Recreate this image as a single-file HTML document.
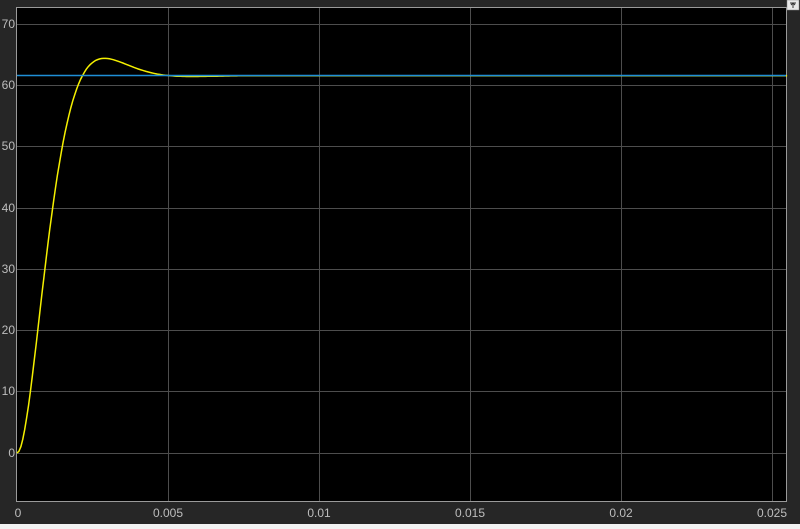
<!DOCTYPE html>
<html><head><style>
html,body{margin:0;padding:0;background:#262626;width:800px;height:529px;overflow:hidden}
svg{display:block}
text{font-family:"Liberation Sans",sans-serif;font-size:12px;fill:#bdbdbd}
</style></head><body>
<svg id="s" width="800" height="529" xmlns="http://www.w3.org/2000/svg">
<rect width="800" height="529" fill="#262626"/>
<rect x="17" y="8" width="769" height="493" fill="#000"/>
<g stroke="#4d4d4d" stroke-width="1">
<line x1="168.5" y1="8" x2="168.5" y2="501"/>
<line x1="319.5" y1="8" x2="319.5" y2="501"/>
<line x1="470.5" y1="8" x2="470.5" y2="501"/>
<line x1="621.5" y1="8" x2="621.5" y2="501"/>
<line x1="772.5" y1="8" x2="772.5" y2="501"/>
<line x1="17" y1="24.5" x2="786" y2="24.5"/>
<line x1="17" y1="85.5" x2="786" y2="85.5"/>
<line x1="17" y1="146.5" x2="786" y2="146.5"/>
<line x1="17" y1="208.5" x2="786" y2="208.5"/>
<line x1="17" y1="269.5" x2="786" y2="269.5"/>
<line x1="17" y1="330.5" x2="786" y2="330.5"/>
<line x1="17" y1="391.5" x2="786" y2="391.5"/>
<line x1="17" y1="453.5" x2="786" y2="453.5"/>
</g>
<rect x="16.5" y="7.5" width="770" height="494" fill="none" stroke="#9a9a9a" stroke-width="1"/>
<path id="c" fill="none" stroke="#f5f000" stroke-width="1.5"/>
<line x1="17" y1="75.5" x2="786" y2="75.5" stroke="#1f8fd6" stroke-width="1.5"/>
<g text-anchor="end">
<text x="15" y="28">70</text><text x="15" y="89">60</text><text x="15" y="150">50</text>
<text x="15" y="212">40</text><text x="15" y="273">30</text><text x="15" y="334">20</text>
<text x="15" y="395">10</text><text x="15" y="457">0</text>
</g>
<g text-anchor="middle">
<text x="18" y="517">0</text><text x="168" y="517">0.005</text><text x="319" y="517">0.01</text>
<text x="470" y="517">0.015</text><text x="621" y="517">0.02</text><text x="772" y="517">0.025</text>
</g>
<rect x="787" y="0" width="12" height="10" fill="#e8e8e8" stroke="#888" stroke-width="0.5"/>
<path d="M790 3h6M793 3v5M791 5l2-2 2 2" stroke="#333" stroke-width="1" fill="none"/>
<rect x="0" y="524" width="800" height="5" fill="#f2f2f2"/>
</svg>
<script>
var z=0.70,wn=1517,wd=wn*Math.sqrt(1-z*z),A=61.55,d="";
for(var i=0;i<=400;i++){var t=i*0.0255/400;
var y=A*(1-Math.exp(-z*wn*t)*(Math.cos(wd*t)+z/Math.sqrt(1-z*z)*Math.sin(wd*t)));
var px=17+t/0.005*151,py=453-y*6.13;d+=(i?"L":"M")+px.toFixed(1)+" "+py.toFixed(1);}
document.getElementById("c").setAttribute("d",d);
</script>
</body></html>
